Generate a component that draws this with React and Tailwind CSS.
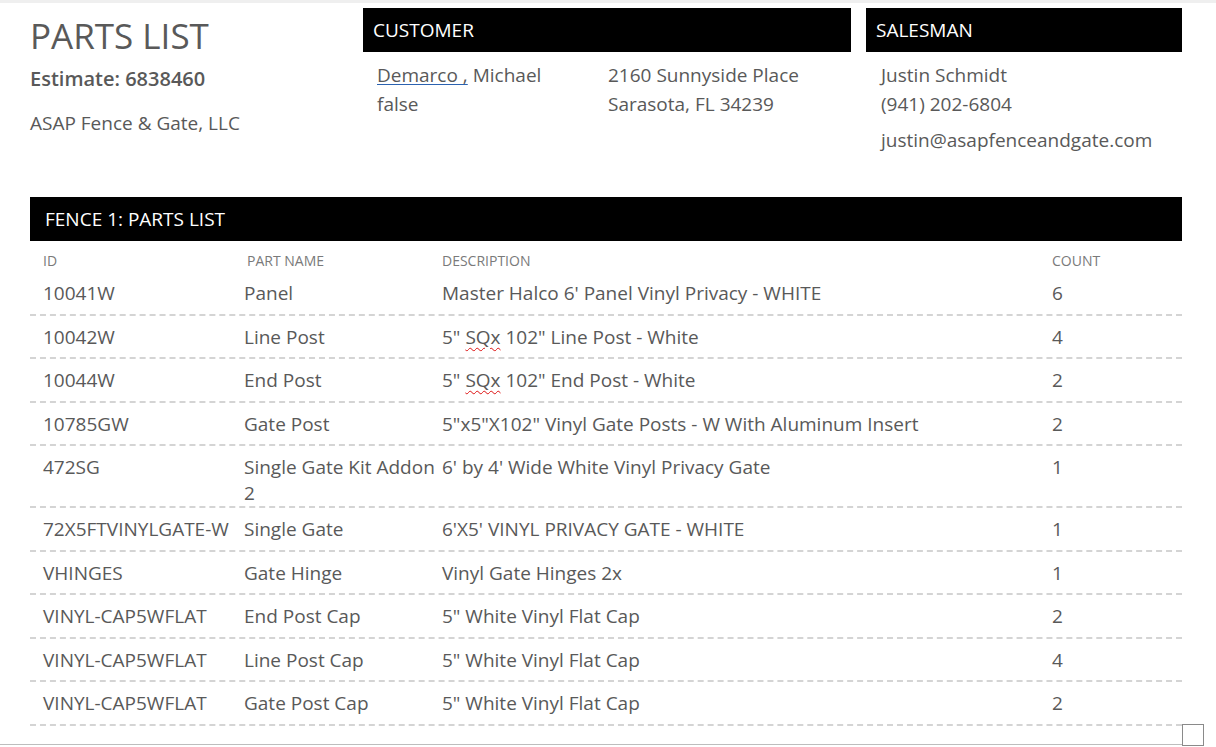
import React from 'react';

const parts = [
    { id: '10041W', name: 'Panel', desc: "Master Halco 6' Panel Vinyl Privacy - WHITE", count: 6 },
    { id: '10042W', name: 'Line Post', desc: 'sq', tail: ' 102" Line Post - White', count: 4 },
    { id: '10044W', name: 'End Post', desc: 'sq', tail: ' 102" End Post - White', count: 2 },
    { id: '10785GW', name: 'Gate Post', desc: '5"x5"X102" Vinyl Gate Posts - W With Aluminum Insert', count: 2 },
    { id: '472SG', name: 'Single Gate Kit Addon 2', desc: "6' by 4' Wide White Vinyl Privacy Gate", count: 1, wrap: true },
    { id: '72X5FTVINYLGATE-W', name: 'Single Gate', desc: "6'X5' VINYL PRIVACY GATE - WHITE", count: 1 },
    { id: 'VHINGES', name: 'Gate Hinge', desc: 'Vinyl Gate Hinges 2x', count: 1 },
    { id: 'VINYL-CAP5WFLAT', name: 'End Post Cap', desc: '5" White Vinyl Flat Cap', count: 2 },
    { id: 'VINYL-CAP5WFLAT', name: 'Line Post Cap', desc: '5" White Vinyl Flat Cap', count: 4 },
    { id: 'VINYL-CAP5WFLAT', name: 'Gate Post Cap', desc: '5" White Vinyl Flat Cap', count: 2 },
];

// Black title bar used for CUSTOMER / SALESMAN / FENCE headers
function Bar({ children, className = '' }) {
    return (
        <div className={`flex items-center h-[44px] bg-black text-white text-[19px] ${className}`}>
            {children}
        </div>
    );
}

function Description({ part }) {
    if (part.desc !== 'sq') return part.desc;
    return (
        <>
            5" <span className="underline decoration-wavy decoration-[#d11] decoration-1 underline-offset-[3px]">SQx</span>
            {part.tail}
        </>
    );
}

export default function App() {
    return (
        <div className="relative w-[1216px] h-[747px] overflow-hidden bg-white text-[#595959] font-['Open_Sans',sans-serif]">
            <div className="h-[3px] bg-[#efefef]" />

            <header className="flex pt-[5px] pl-[30px]">
                <div className="w-[333px] pt-[6px]">
                    <h1 className="text-[35px] leading-[44px] font-normal">PARTS LIST</h1>
                    <p className="mt-[6px] text-[20px] font-semibold">Estimate: 6838460</p>
                    <p className="mt-[15px] text-[19px]">ASAP Fence &amp; Gate, LLC</p>
                </div>

                <div className="w-[488px]">
                    <Bar className="px-[10px]">CUSTOMER</Bar>
                    <div className="flex pl-[14px] pt-[9px] text-[19px] leading-[29px]">
                        <div className="w-[231px]">
                            <span className="underline decoration-[#2b62b0] underline-offset-[2px]">Demarco ,</span> Michael
                            <br />false
                        </div>
                        <div>
                            2160 Sunnyside Place
                            <br />Sarasota, FL 34239
                        </div>
                    </div>
                </div>

                <div className="w-[316px] ml-[15px]">
                    <Bar className="px-[10px]">SALESMAN</Bar>
                    <div className="pl-[15px] pt-[9px] text-[19px] leading-[29px]">
                        <div>Justin Schmidt</div>
                        <div>(941) 202-6804</div>
                        <div className="mt-[7px]">justin@asapfenceandgate.com</div>
                    </div>
                </div>
            </header>

            <section className="mx-[30px] mt-[42px] w-[1152px]">
                <Bar className="px-[15px]">FENCE 1: PARTS LIST</Bar>
                <div className="grid grid-cols-[201px_198px_610px_1fr] pl-[13px] pt-[10px] pb-[1px] text-[14px] leading-[20px] text-[#7a7a7a]">
                    <div>ID</div>
                    <div className="pl-[3px]">PART NAME</div>
                    <div>DESCRIPTION</div>
                    <div>COUNT</div>
                </div>
                {parts.map((p, i) => (
                    <div
                        key={i}
                        className={`grid grid-cols-[201px_198px_610px_1fr] pl-[13px] pt-[8px] ${p.wrap ? 'pb-0' : 'pb-[7.5px]'} text-[19px] leading-[26px] border-b-2 border-dashed border-[#d4d4d4]`}
                    >
                        <div className="whitespace-nowrap">{p.id}</div>
                        <div>{p.name}</div>
                        <div><Description part={p} /></div>
                        <div>{p.count}</div>
                    </div>
                ))}
            </section>

            <div className="absolute left-0 bottom-[2px] w-[1186px] h-px bg-[#bdbdbd]" />
            <div className="absolute left-[1182px] top-[724px] w-[22px] h-[22px] border border-[#8a8a8a] bg-white" />
        </div>
    );
}
